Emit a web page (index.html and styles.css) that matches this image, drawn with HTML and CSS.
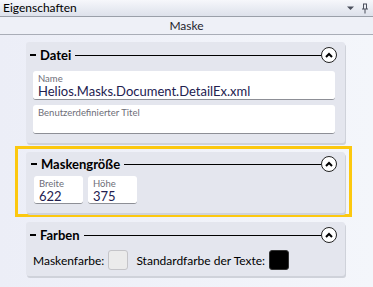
FILE: index.html
```html
<!doctype html>
<html>
<head>
    <title>Eigenschaften</title>
    <meta charset="utf-8" />
    <link rel="stylesheet" href="styles.css">
</head>
<body>

<header class="title-bar">
    <span class="title">Eigenschaften</span>
    <span class="title-icons">
        <svg width="9" height="6" viewBox="0 0 9 6"><path d="M1 1.5h7L4.5 5z" fill="#4a4f5c"/></svg>
        <svg width="8" height="11" viewBox="0 0 8 11"><path d="M2 1h4M2.5 1v5M5.5 1v5M1 6h6M4 6v4.5" stroke="#4a4f5c" stroke-width="1" fill="none"/></svg>
    </span>
</header>

<div class="sub-bar">Maske</div>

<main class="content">

    <section class="card card-datei">
        <div class="card-head">
            <span class="dash"></span>
            <h4>Datei</h4>
            <span class="rule"></span>
            <span class="toggle"><svg width="8" height="6" viewBox="0 0 8 6"><path d="M1 5l3-3 3 3" stroke="#000" stroke-width="2" fill="none"/></svg></span>
        </div>
        <div class="field wide">
            <label>Name</label>
            <div class="value">Helios.Masks.Document.DetailEx.xml</div>
        </div>
        <div class="field wide">
            <label>Benutzerdefinierter Titel</label>
            <div class="value"></div>
        </div>
    </section>

    <div class="highlight">
        <section class="card card-size">
            <div class="card-head">
                <span class="dash"></span>
                <h4>Maskengröße</h4>
                <span class="rule"></span>
                <span class="toggle"><svg width="8" height="6" viewBox="0 0 8 6"><path d="M1 5l3-3 3 3" stroke="#000" stroke-width="2" fill="none"/></svg></span>
            </div>
            <div class="size-row">
                <div class="field small">
                    <label>Breite</label>
                    <div class="value">622</div>
                </div>
                <div class="field small">
                    <label>Höhe</label>
                    <div class="value">375</div>
                </div>
            </div>
        </section>
    </div>

    <section class="card card-colors">
        <div class="card-head">
            <span class="dash"></span>
            <h4>Farben</h4>
            <span class="rule"></span>
            <span class="toggle"><svg width="8" height="6" viewBox="0 0 8 6"><path d="M1 5l3-3 3 3" stroke="#000" stroke-width="2" fill="none"/></svg></span>
        </div>
        <div class="color-row">
            <span>Maskenfarbe:</span>
            <span class="swatch light"></span>
            <span>Standardfarbe der Texte:</span>
            <span class="swatch dark"></span>
        </div>
    </section>

</main>

</body>
</html>
```

FILE: styles.css
```css
body{
    margin:0;
    width:373px;
    height:287px;
    overflow:hidden;
    font-family:Lato, "Noto Sans", sans-serif;
    background:linear-gradient(to right, #eceef7, #f4f6fb);
    color:#000;
}

.title-bar{
    height:16px;
    border-bottom:1px solid #9a9fa9;
    background:linear-gradient(#f6f7fb, #dde1eb);
    display:flex;
    align-items:center;
    justify-content:space-between;
    padding:0 4px 0 3px;
}

.title{
    font-size:12px;
    line-height:16px;
}

.title-icons{
    display:flex;
    align-items:center;
    gap:6px;
}

.sub-bar{
    height:17px;
    line-height:17px;
    border-bottom:1px solid #a9adb7;
    background:#eef0f7;
    text-align:center;
    font-size:12px;
    color:#1d1d2c;
}

.content{
    padding:7px 0 0 15px;
}

.card{
    margin-left:11px;
    width:319px;
    box-sizing:border-box;
    background:#e4e6ee;
    border-radius:3px;
    box-shadow:1px 2px 0 #cfd2da;
    padding:0 10px 0 7px;
}

.card-head{
    display:flex;
    align-items:center;
    height:24px;
    margin-left:-3px;
}

.dash{
    width:6px;
    height:1.5px;
    background:#000;
    margin-right:4px;
}

.card-head h4{
    margin:0;
    font-size:13px;
    font-weight:bold;
    line-height:16px;
}

.rule{
    flex:1;
    height:1px;
    background:#000;
    margin-left:4px;
}

.toggle{
    width:14px;
    height:14px;
    border:1px solid #222;
    border-radius:50%;
    background:#fff;
    display:flex;
    align-items:center;
    justify-content:center;
    margin-right:-2px;
}

.card-datei{
    padding-top:1px;
    padding-bottom:8px;
    height:101px;
}

.card-datei .card-head{
    margin-bottom:4px;
}

.field{
    background:#fff;
    border-radius:3px;
    border-bottom:1px solid #8d8f96;
    box-sizing:border-box;
    padding:3px 5px 0 5px;
}

.field label{
    display:block;
    font-size:9.5px;
    line-height:10px;
    color:#6e6e78;
}

.value{
    font-size:13px;
    line-height:14px;
    color:#22204f;
}

.field.wide{
    height:29px;
    margin-bottom:5px;
}

.highlight{
    margin-top:3px;
    width:337px;
    box-sizing:border-box;
    border:3px solid #fcc80f;
    padding:3px 4px 1px 0;
}

.card-size{
    margin-left:8px;
    height:61px;
    padding-left:8px;
}

.size-row{
    display:flex;
    gap:5px;
}

.field.small{
    width:49px;
    height:28px;
}

.card-colors{
    margin-top:5px;
    height:54px;
    padding-top:1px;
}

.color-row{
    display:flex;
    align-items:center;
    font-size:12px;
    height:28px;
    margin-top:-1px;
}

.swatch{
    width:20px;
    height:20px;
    box-sizing:border-box;
    border-radius:3px;
    margin:0 8px 0 4px;
}

.swatch.light{
    background:#ebebeb;
    border:1px solid #c4c4c8;
}

.swatch.dark{
    background:#000;
    border:1px solid #333;
    margin-left:4px;
}
```
